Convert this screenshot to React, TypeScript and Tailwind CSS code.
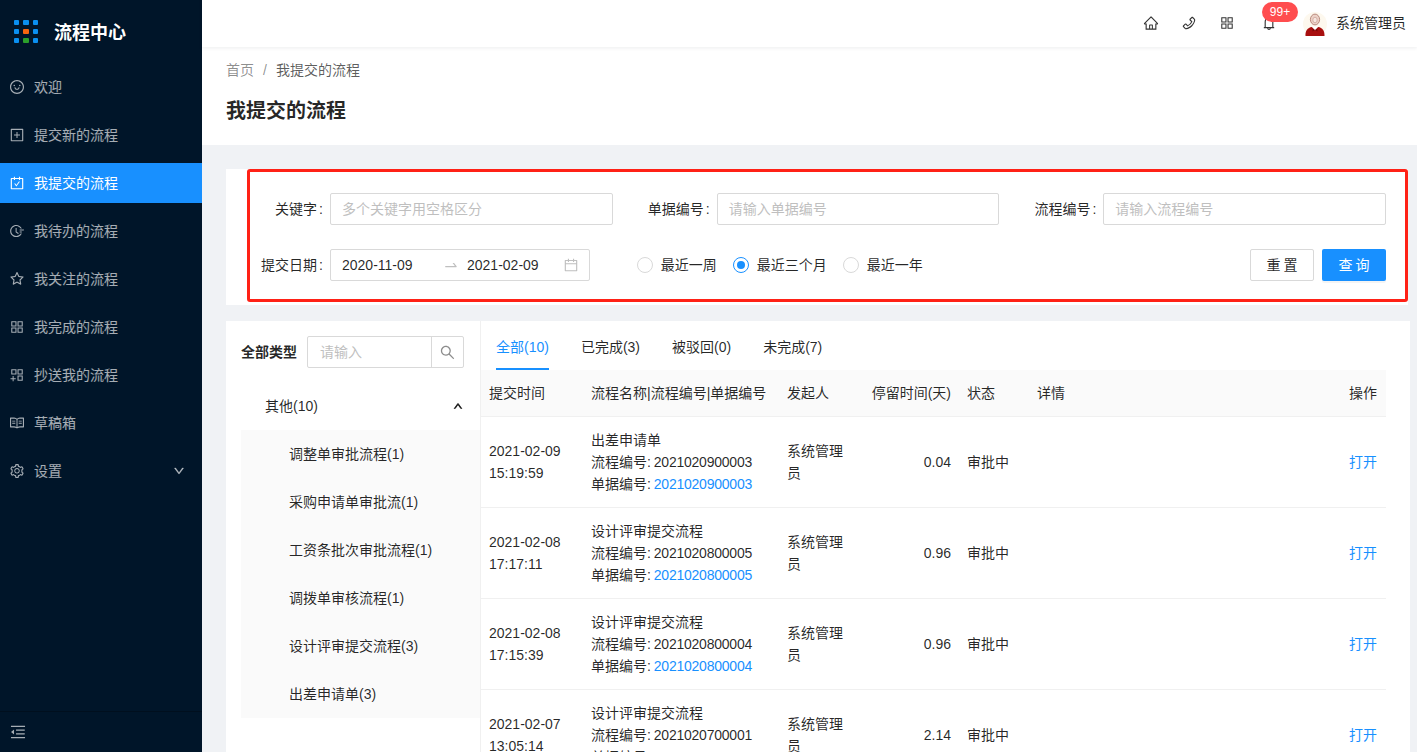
import {
  AiOutlineAppstore,
  AiOutlineAppstoreAdd,
  AiOutlineBell,
  AiOutlineCalendar,
  AiOutlineCarryOut,
  AiOutlineDown,
  AiOutlineFieldTime,
  AiOutlineHome,
  AiOutlineMenuFold,
  AiOutlinePhone,
  AiOutlinePlusSquare,
  AiOutlineRead,
  AiOutlineSearch,
  AiOutlineSetting,
  AiOutlineSmile,
  AiOutlineStar,
  AiOutlineSwapRight,
  AiOutlineUp,
} from "react-icons/ai";

const menu = [
  { label: "欢迎", icon: <AiOutlineSmile /> },
  { label: "提交新的流程", icon: <AiOutlinePlusSquare /> },
  { label: "我提交的流程", icon: <AiOutlineCarryOut />, active: true },
  { label: "我待办的流程", icon: <AiOutlineFieldTime /> },
  { label: "我关注的流程", icon: <AiOutlineStar /> },
  { label: "我完成的流程", icon: <AiOutlineAppstore /> },
  { label: "抄送我的流程", icon: <AiOutlineAppstoreAdd /> },
  { label: "草稿箱", icon: <AiOutlineRead /> },
  { label: "设置", icon: <AiOutlineSetting />, arrow: true },
];

const types = [
  "调整单审批流程(1)",
  "采购申请单审批流(1)",
  "工资条批次审批流程(1)",
  "调拨单审核流程(1)",
  "设计评审提交流程(3)",
  "出差申请单(3)",
];

const rows = [
  { date: "2021-02-09", time: "15:19:59", name: "出差申请单", flow: "2021020900003", bill: "2021020900003", stay: "0.04" },
  { date: "2021-02-08", time: "17:17:11", name: "设计评审提交流程", flow: "2021020800005", bill: "2021020800005", stay: "0.96" },
  { date: "2021-02-08", time: "17:15:39", name: "设计评审提交流程", flow: "2021020800004", bill: "2021020800004", stay: "0.96" },
  { date: "2021-02-07", time: "13:05:14", name: "设计评审提交流程", flow: "2021020700001", bill: "2021020700001", stay: "2.14" },
];

function Logo() {
  const colors = ["bg-[#0a8ff0]", "bg-[#0a8ff0]", "bg-[#0a8ff0]", "bg-[#0a8ff0]", "bg-[#f5650f]", "bg-[#0a8ff0]", "bg-[#0a8ff0]", "bg-[#2ba02b]", "bg-[#0a8ff0]"];
  return (
    <div className="grid grid-cols-3 gap-[4px] w-[24px]">
      {colors.map((c, i) => (
        <span key={i} className={`h-[5.3px] w-[5.3px] rounded-[1px] ${c}`} />
      ))}
    </div>
  );
}

function Sidebar() {
  return (
    <aside className="w-[202px] shrink-0 h-full bg-[#001529] flex flex-col">
      <div className="h-[63px] flex items-center pl-[14px] gap-[16px]">
        <Logo />
        <span className="text-white text-[18px] font-bold pt-[3px]">流程中心</span>
      </div>
      <nav className="flex-1 pt-[4px]">
        {menu.map((m) => (
          <div
            key={m.label}
            className={`h-[40px] mb-[8px] flex items-center pl-[9px] pr-[17px] text-[14px] ${
              m.active ? "bg-[#1890ff] text-white" : "text-white/65"
            }`}
          >
            <span className="text-[16px] w-[16px] mr-[9px] flex justify-center">{m.icon}</span>
            <span className="flex-1">{m.label}</span>
            {m.arrow && <AiOutlineDown className="text-[12px] stroke-current stroke-[40]" />}
          </div>
        ))}
      </nav>
      <div className="h-[41px] border-t border-black/25 flex items-center pl-[9px] text-white/65 text-[18px]">
        <AiOutlineMenuFold />
      </div>
    </aside>
  );
}

function Avatar() {
  return (
    <svg width="24" height="24" viewBox="0 0 24 24" className="mt-[1px]">
      <circle cx="12" cy="12" r="12" fill="#fdf8ee" />
      <ellipse cx="12" cy="7.5" rx="4.6" ry="5.4" fill="#ecd2c8" stroke="#b9897c" strokeWidth="1" />
      <ellipse cx="12" cy="8" rx="2.2" ry="2.8" fill="#f6e6df" stroke="#c79c90" strokeWidth="0.7" />
      <path d="M2.5 24c-.4-5 2.2-8.4 6.3-9l3.2 2.6 3.2-2.6c4.100.6 6.700 4 6.300 9z" fill="#a80f0f" />
      <path d="M9 14.500h6l-3 4z" fill="#fff" />
      <path d="M9.500 16.500l2.500 1.500 2.500-1.500v3l-2.500-1.200-2.500 1.200z" fill="#7a0808" />
    </svg>
  );
}

function Header() {
  return (
    <header className="h-[47px] shrink-0 bg-white shadow-[0_1px_4px_rgba(0,21,41,0.08)] flex items-center justify-end pr-[11px] pb-[1px] z-10 text-[#333]">
      <AiOutlineHome className="text-[16px] mr-[22px]" />
      <AiOutlinePhone className="text-[16px] mr-[22px]" />
      <AiOutlineAppstore className="text-[16px] mr-[26px]" />
      <div className="relative mr-[26px] flex">
        <AiOutlineBell className="text-[16px]" />
        <span className="absolute -top-[13px] left-[1px] h-[20px] w-[36px] rounded-[10px] bg-[#ff4d4f] text-white text-[12px] leading-[20px] text-center">
          99+
        </span>
      </div>
      <Avatar />
      <span className="ml-[9px] text-[14px] text-black/85">系统管理员</span>
    </header>
  );
}

function FieldLabel({ text }: { text: string }) {
  return (
    <label className="w-[80px] shrink-0 pr-[7px] text-right text-[14px] text-black/85">
      {text}
      <span className="ml-[2px]">:</span>
    </label>
  );
}

function Field({ label, placeholder }: { label: string; placeholder: string }) {
  return (
    <div className="flex items-center">
      <FieldLabel text={label} />
      <div className="flex-1 h-[32px] border border-[#d9d9d9] rounded-[2px] flex items-center px-[11px] text-[14px] text-[#bfbfbf]">
        {placeholder}
      </div>
    </div>
  );
}

function Radio({ label, checked }: { label: string; checked?: boolean }) {
  return (
    <div className="flex items-center gap-[8px] text-[14px] text-black/85">
      <span
        className={`h-[16px] w-[16px] rounded-full border flex items-center justify-center ${
          checked ? "border-[#1890ff]" : "border-[#d9d9d9]"
        }`}
      >
        {checked && <span className="h-[8px] w-[8px] rounded-full bg-[#1890ff]" />}
      </span>
      {label}
    </div>
  );
}

function Filter() {
  return (
    <section className="bg-white mr-[9px] pl-[21px] h-[136px]">
      <div className="h-[133px] border-[3px] border-[#ff2116] rounded-[3px] pt-[21px]">
        <div className="grid grid-cols-3 gap-x-[24px] gap-y-[24px] w-[1136px]">
          <Field label="关键字" placeholder="多个关键字用空格区分" />
          <Field label="单据编号" placeholder="请输入单据编号" />
          <Field label="流程编号" placeholder="请输入流程编号" />
          <div className="flex items-center">
            <FieldLabel text="提交日期" />
            <div className="w-[260px] h-[32px] border border-[#d9d9d9] rounded-[2px] flex items-center px-[10px] text-[14px] text-black/85">
              <span className="w-[102px] pl-[1px]">2020-11-09</span>
              <AiOutlineSwapRight className="text-[#bfbfbf] text-[16px] mr-[7px]" />
              <span className="flex-1 pl-[1px]">2021-02-09</span>
              <AiOutlineCalendar className="text-[#bfbfbf] text-[16px]" />
            </div>
          </div>
          <div className="flex items-center gap-[16px] h-[32px]">
            <Radio label="最近一周" />
            <Radio label="最近三个月" checked />
            <Radio label="最近一年" />
          </div>
          <div className="flex items-center justify-end gap-[8px]">
            <button className="w-[64px] h-[32px] pl-[3px] border border-[#d9d9d9] rounded-[2px] bg-white text-[14px] text-black/85 tracking-[3px]">重置</button>
            <button className="w-[64px] h-[32px] pl-[3px] rounded-[2px] bg-[#1890ff] text-white text-[14px] tracking-[3px] shadow-[0_2px_0_rgba(0,0,0,0.045)]">查询</button>
          </div>
        </div>
      </div>
    </section>
  );
}

function TypeTree() {
  return (
    <div className="w-[255px] shrink-0 border-r border-[#f0f0f0] pl-[15px] pt-[15px]">
      <div className="flex items-center pr-[16px]">
        <span className="text-[14px] font-semibold text-black/85 mr-[10px] whitespace-nowrap">全部类型</span>
        <div className="flex-1 h-[32px] border border-[#d9d9d9] rounded-[2px] flex items-center text-[14px] text-[#bfbfbf]">
          <span className="flex-1 pl-[12px]">请输入</span>
          <span className="w-[32px] h-full border-l border-[#d9d9d9] flex items-center justify-center text-[#8c8c8c] text-[17px]">
            <AiOutlineSearch />
          </span>
        </div>
      </div>
      <div className="mt-[14px] h-[48px] flex items-center justify-between pl-[24px] pr-[17px] text-[14px] text-black/85">
        其他(10)
        <AiOutlineUp className="text-[10px] stroke-current stroke-[90]" />
      </div>
      <ul className="bg-[#fafafa]">
        {types.map((t) => (
          <li key={t} className="h-[48px] flex items-center pl-[48px] text-[14px] text-black/85 whitespace-nowrap">
            {t}
          </li>
        ))}
      </ul>
    </div>
  );
}

function Tabs() {
  const tabs = ["全部(10)", "已完成(3)", "被驳回(0)", "未完成(7)"];
  return (
    <div className="flex gap-[32px] pl-[15px] h-[49px] text-[14px] text-black/85">
      {tabs.map((t, i) => (
        <div
          key={t}
          className={`h-full pt-[15px] leading-[22px] ${i === 0 ? "text-[#1890ff] border-b-2 border-[#1890ff]" : ""}`}
        >
          {t}
        </div>
      ))}
    </div>
  );
}

function FlowTable() {
  return (
    <table className="table-fixed w-[905px] text-[14px] text-black/85 leading-[22px] border-collapse">
      <colgroup>
        <col className="w-[102px]" />
        <col className="w-[196px]" />
        <col className="w-[84px]" />
        <col className="w-[96px]" />
        <col className="w-[70px]" />
        <col />
        <col className="w-[45px]" />
      </colgroup>
      <thead>
        <tr className="h-[46px] bg-[#fafafa] border-b border-[#f0f0f0] text-left">
          <th className="px-[8px] font-normal">提交时间</th>
          <th className="px-[8px] font-normal whitespace-nowrap">流程名称|流程编号|单据编号</th>
          <th className="px-[8px] font-normal">发起人</th>
          <th className="px-[8px] font-normal text-right">停留时间(天)</th>
          <th className="px-[8px] font-normal">状态</th>
          <th className="px-[8px] font-normal">详情</th>
          <th className="px-[8px] font-normal">操作</th>
        </tr>
      </thead>
      <tbody>
        {rows.map((r) => (
          <tr key={r.flow} className="h-[91px] border-b border-[#f0f0f0]">
            <td className="px-[8px]">
              {r.date}
              <br />
              {r.time}
            </td>
            <td className="px-[8px] whitespace-nowrap">
              {r.name}
              <br />
              流程编号: <span className="-ml-[1px] tracking-[-0.23px]">{r.flow}</span>
              <br />
              单据编号: <span className="-ml-[1px] tracking-[-0.23px] text-[#1890ff]">{r.bill}</span>
            </td>
            <td className="px-[8px]">系统管理员</td>
            <td className="px-[8px] text-right">{r.stay}</td>
            <td className="px-[8px]">审批中</td>
            <td className="px-[8px]" />
            <td className="px-[8px] text-[#1890ff] whitespace-nowrap">打开</td>
          </tr>
        ))}
      </tbody>
    </table>
  );
}

export default function App() {
  return (
    <div className="h-screen w-full flex overflow-hidden bg-[#f0f2f5] font-['Liberation_Sans','Noto_Sans_CJK_SC',sans-serif]">
      <Sidebar />
      <main className="flex-1 min-w-0 flex flex-col">
        <Header />
        <div className="bg-white h-[98px] shrink-0 pl-[24px] pt-[12px]">
          <div className="text-[14px] leading-[22px] text-black/45">
            首页<span className="ml-[9px] mr-[9px]">/</span>
            <span className="text-black/65">我提交的流程</span>
          </div>
          <h1 className="mt-[16px] text-[20px] leading-[28px] font-semibold text-black/85">我提交的流程</h1>
        </div>
        <div className="flex-1 min-h-0 pl-[24px] pt-[24px] flex flex-col gap-[16px]">
          <Filter />
          <section className="flex-1 bg-white mr-[7px] flex overflow-hidden">
            <TypeTree />
            <div>
              <Tabs />
              <FlowTable />
            </div>
          </section>
        </div>
      </main>
    </div>
  );
}
